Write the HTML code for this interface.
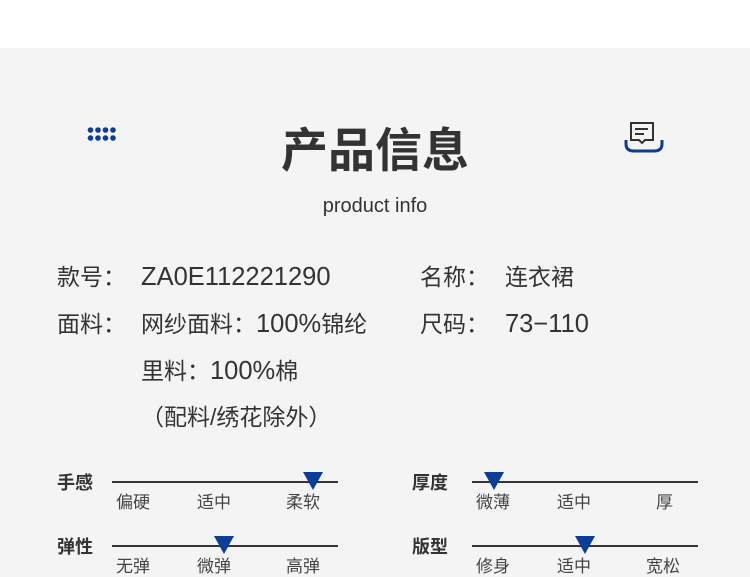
<!DOCTYPE html><html><head><meta charset="utf-8"><style>
body{margin:0;width:750px;height:576px;overflow:hidden;background:#f4f4f4;font-family:"Liberation Sans","Noto Sans CJK SC",sans-serif;color:#333;position:relative}
.top{position:absolute;left:0;top:0;width:750px;height:48px;background:#fff}
.a{position:absolute;white-space:nowrap}
.t{left:0;width:750px;text-align:center}
.r{font-size:23px;line-height:30px}
.r b{font-weight:normal;font-size:25.5px}
.sl{font-size:18px;font-weight:bold;line-height:24px;font-family:"Noto Sans CJK SC",sans-serif}
.tk{font-size:17px;line-height:20px;color:#444;font-family:"Noto Sans CJK SC",sans-serif}
.ln{position:absolute;height:2px;background:#333}
.tri{position:absolute;width:0;height:0;border-left:10px solid transparent;border-right:10px solid transparent;border-top:18px solid #0d3d96}
</style></head><body>
<div class="top"></div>
<svg class="a" style="left:86px;top:126px" width="36" height="18"><g fill="#0d3d96"><circle cx="4.5" cy="4" r="2.8"/><circle cx="12" cy="4" r="2.8"/><circle cx="19.5" cy="4" r="2.8"/><circle cx="27" cy="4" r="2.8"/><circle cx="4.5" cy="12" r="2.8"/><circle cx="12" cy="12" r="2.8"/><circle cx="19.5" cy="12" r="2.8"/><circle cx="27" cy="12" r="2.8"/></g></svg>
<svg class="a" style="left:620px;top:118px" width="46" height="40"><path d="M6 22 v4 q0 7 8 7 h20 q8 0 8 -7 v-4" fill="none" stroke="#0d3d96" stroke-width="3"/><path d="M11 5 h22 v17 h-8 l-3 3 l-3 -3 h-8 z" fill="#f4f4f4" stroke="#333" stroke-width="2"/><path d="M15 11 h13 M15 16 h9" stroke="#333" stroke-width="2"/></svg>
<div class="a t" style="top:114px;font-size:47px;font-weight:bold;line-height:66px;font-family:'Noto Sans CJK SC',sans-serif">产品信息</div>
<div class="a t" style="top:194px;font-size:20px;line-height:24px">product info</div>
<div class="a r" style="left:57px;top:262px">款号：</div>
<div class="a r" style="left:141px;top:262px"><b>ZA0E112221290</b></div>
<div class="a r" style="left:420px;top:262px">名称：</div>
<div class="a r" style="left:505px;top:262px">连衣裙</div>
<div class="a r" style="left:57px;top:309px">面料：</div>
<div class="a r" style="left:141px;top:309px">网纱面料：<b>100%</b>锦纶</div>
<div class="a r" style="left:420px;top:309px">尺码：</div>
<div class="a r" style="left:505px;top:309px"><b>73−110</b></div>
<div class="a r" style="left:141px;top:356px">里料：<b>100%</b>棉</div>
<div class="a r" style="left:141px;top:402px">（配料/绣花除外）</div>

<div class="a sl" style="left:57px;top:470px">手感</div>
<div class="ln" style="left:112px;top:481px;width:226px"></div>
<div class="tri" style="left:303px;top:472px"></div>
<div class="a tk" style="left:116px;top:491px">偏硬</div><div class="a tk" style="left:197px;top:491px">适中</div><div class="a tk" style="left:286px;top:491px">柔软</div>

<div class="a sl" style="left:412px;top:470px">厚度</div>
<div class="ln" style="left:472px;top:481px;width:226px"></div>
<div class="tri" style="left:484px;top:472px"></div>
<div class="a tk" style="left:476px;top:491px">微薄</div><div class="a tk" style="left:557px;top:491px">适中</div><div class="a tk" style="left:656px;top:491px">厚</div>

<div class="a sl" style="left:57px;top:534px">弹性</div>
<div class="ln" style="left:112px;top:545px;width:226px"></div>
<div class="tri" style="left:214px;top:536px"></div>
<div class="a tk" style="left:116px;top:555px">无弹</div><div class="a tk" style="left:197px;top:555px">微弹</div><div class="a tk" style="left:286px;top:555px">高弹</div>

<div class="a sl" style="left:412px;top:534px">版型</div>
<div class="ln" style="left:472px;top:545px;width:226px"></div>
<div class="tri" style="left:575px;top:536px"></div>
<div class="a tk" style="left:476px;top:555px">修身</div><div class="a tk" style="left:557px;top:555px">适中</div><div class="a tk" style="left:646px;top:555px">宽松</div>
</body></html>
